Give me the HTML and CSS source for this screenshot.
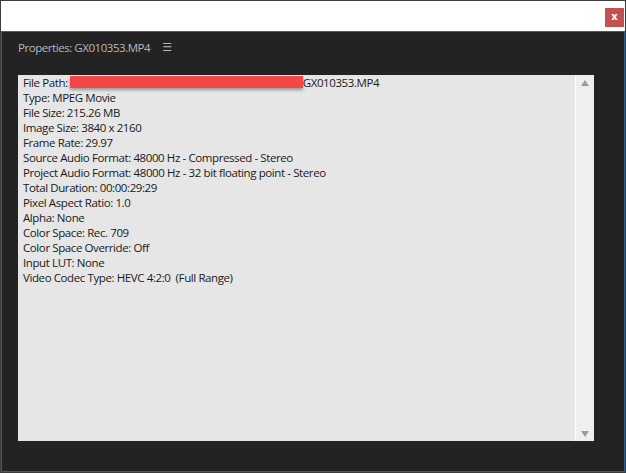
FILE: index.html
```html
<!DOCTYPE html>
<html>
<head>
<meta charset="utf-8">
<link rel="stylesheet" href="styles.css">
</head>
<body>
<div class="window">
  <div class="titlebar">
    <div class="close">x</div>
  </div>
  <div class="panel">
    <div class="panel-head">
      <span class="panel-title">Properties: GX010353.MP4</span>
      <span class="menu">&#9776;</span>
    </div>
    <div class="content">
      <div class="lines">
        <div class="line">File Path:<span class="redact"></span>GX010353.MP4</div>
        <div class="line">Type: MPEG Movie</div>
        <div class="line">File Size: 215.26 MB</div>
        <div class="line">Image Size: 3840 x 2160</div>
        <div class="line">Frame Rate: 29.97</div>
        <div class="line">Source Audio Format: 48000 Hz - Compressed - Stereo</div>
        <div class="line">Project Audio Format: 48000 Hz - 32 bit floating point - Stereo</div>
        <div class="line">Total Duration: 00:00:29:29</div>
        <div class="line">Pixel Aspect Ratio: 1.0</div>
        <div class="line">Alpha: None</div>
        <div class="line">Color Space: Rec. 709</div>
        <div class="line">Color Space Override: Off</div>
        <div class="line">Input LUT: None</div>
        <div class="line">Video Codec Type: HEVC 4:2:0&nbsp; (Full Range)</div>
      </div>
      <div class="scrollbar">
        <div class="arrow up"></div>
        <div class="arrow down"></div>
      </div>
    </div>
  </div>
</div>
</body>
</html>
```
FILE: styles.css
```css
html, body {
  margin: 0;
  padding: 0;
  background: #3c3c3c;
}
.window {
  width: 626px;
  height: 473px;
  box-sizing: border-box;
  border: 1px solid #3c3c3c;
  display: flex;
  flex-direction: column;
  background: #ffffff;
}
.titlebar {
  height: 30px;
  flex: none;
  background: #ffffff;
  display: flex;
  justify-content: flex-end;
  align-items: flex-start;
  padding: 7px 1px 0 0;
  box-sizing: border-box;
}
.close {
  width: 19px;
  height: 19px;
  background: #c4504f;
  color: #ffffff;
  font-family: "DejaVu Sans", sans-serif;
  font-weight: bold;
  font-size: 10px;
  line-height: 17px;
  text-align: center;
}
.panel {
  flex: 1;
  background: #232323;
  border: 1px solid #2f5f8c;
  display: flex;
  flex-direction: column;
  padding: 0 30px 30px 16px;
  box-sizing: border-box;
  min-height: 0;
}
.panel-head {
  height: 43px;
  flex: none;
  display: flex;
  align-items: center;
  padding: 0 0 12px 0;
  box-sizing: border-box;
  font-family: "Open Sans", sans-serif;
  font-size: 11.5px;
  color: #b8b8b8;
}
.panel-title {
  letter-spacing: -0.45px;
}
.menu {
  margin-left: 12px;
  font-family: "DejaVu Sans", sans-serif;
  font-size: 11px;
  color: #b8b8b8;
}
.content {
  flex: 1;
  background: #e6e6e6;
  border-radius: 0 2px 0 0;
  display: flex;
  min-height: 0;
}
.lines {
  flex: 1;
  padding: 0 0 0 5px;
  font-family: "Open Sans", sans-serif;
  font-size: 11.5px;
  line-height: 15px;
  color: #1a1a1a;
  letter-spacing: -0.4px;
}
.line {
  white-space: nowrap;
}
.redact {
  display: inline-block;
  width: 233px;
  height: 12px;
  margin-left: 2px;
  background: #f54747;
  vertical-align: -1px;
  box-shadow: 0 2px 3px rgba(0,0,0,0.35);
}
.scrollbar {
  width: 18px;
  flex: none;
  background: #efefef;
  border-left: 1px solid #ffffff;
  display: flex;
  flex-direction: column;
  justify-content: space-between;
  align-items: center;
  padding: 5px 0 4px 0;
}
.arrow {
  width: 0;
  height: 0;
  border-left: 4px solid transparent;
  border-right: 4px solid transparent;
}
.arrow.up {
  border-bottom: 6px solid #9d9d9d;
}
.arrow.down {
  border-top: 6px solid #9d9d9d;
}
```
